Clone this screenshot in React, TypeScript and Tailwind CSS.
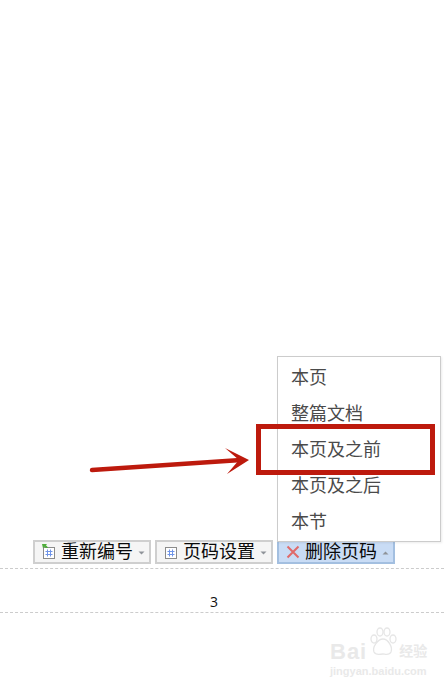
const cjk = "font-['Inter','Noto_Sans_CJK_SC',sans-serif]";

function Caret({ up = false }: { up?: boolean }) {
  return (
    <svg width="7" height="4" viewBox="0 0 7 4" className="ml-[5px] mt-[2px]">
      <path d={up ? "M3.5 0.5L6.5 3.5H0.5Z" : "M0.5 0.5H6.5L3.5 3.5Z"} fill="#8f9399" />
    </svg>
  );
}

function HashIcon({ green = false }: { green?: boolean }) {
  return (
    <svg width="14" height="16" viewBox="0 0 14 16" className="shrink-0">
      <rect x="1.5" y="3.5" width="11" height="11" fill="#fff" stroke="#8b8b8b" />
      <path d="M5.5 5.5V12.5M8.5 5.5V12.5M3.5 7.5H10.5M3.5 10.5H10.5" stroke="#6f94e8" strokeWidth="1" fill="none" />
      {green && <path d="M0 0H5L3.8 1.4C5 1.8 5.6 2.5 6 4H3.6C3.4 3.3 3 3 2.4 2.8L1 4.2Z" fill="#4fae3c" />}
    </svg>
  );
}

function ToolButton({ label, icon, active = false }: { label: string; icon: React.ReactNode; active?: boolean }) {
  return (
    <div
      className={`flex h-[24px] w-[118px] items-center border-2 pl-[7px] ${
        active ? "border-[#a3bfe0] bg-[#c9dcf5]" : "border-[#cfcfcf] bg-[#f5f5f5]"
      }`}
    >
      {icon}
      <span className="ml-[5px] text-[18px] leading-[22px] text-[#0a0a0a]">{label}</span>
      <Caret up={active} />
    </div>
  );
}

const items = ["本页", "整篇文档", "本页及之前", "本页及之后", "本节"];

export default function App() {
  return (
    <div className={`relative flex h-[687px] w-[444px] flex-col overflow-hidden bg-white ${cjk}`}>
      <div className="h-[540px] shrink-0" />
      <div className="flex h-[24px] shrink-0 gap-[4px] pl-[33px]">
        <ToolButton label="重新编号" icon={<HashIcon green />} />
        <ToolButton label="页码设置" icon={<HashIcon />} />
        <ToolButton
          active
          label="删除页码"
          icon={
            <svg width="14" height="14" viewBox="0 0 14 14" className="shrink-0">
              <path d="M1.5 1.5L12.5 12.5M12.5 1.5L1.5 12.5" stroke="#e06a6a" strokeWidth="2" fill="none" />
            </svg>
          }
        />
      </div>
      <div className="mt-[4px] h-[45px] shrink-0 border-y border-dashed border-[#cccccc]">
        <div className="pl-[210px] pt-[24px] font-['Open_Sans',sans-serif] text-[14px] leading-[18px] text-[#111]">3</div>
      </div>

      {/* dropdown menu */}
      <div className="absolute left-[277px] top-[356px] w-[164px] border border-[#cccccc] bg-white py-[2px] pl-[13px] shadow-[1px_1px_2px_rgba(0,0,0,0.08)]">
        {items.map((t) => (
          <div key={t} className="flex h-[36px] items-center text-[18px] text-[#4a4a4a]">
            {t}
          </div>
        ))}
      </div>

      {/* annotation rectangle */}
      <div className="absolute left-[256px] top-[424px] h-[51px] w-[179px] border-[5px] border-[#bd1a0d]" />

      {/* annotation arrow */}
      <svg className="absolute left-[85px] top-[445px]" width="170" height="32" viewBox="0 0 170 32">
        <path d="M7 25L156 15" stroke="#bd1a0d" strokeWidth="4.5" strokeLinecap="round" fill="none" />
        <path d="M140 3L164 15L142 29L154 15Z" fill="#bd1a0d" />
      </svg>

      {/* watermark */}
      <div className="absolute left-[330px] top-[640px] h-[40px] w-[114px] text-[#e9e9e9]">
        <div className="flex items-start">
          <span className="font-['Liberation_Sans',sans-serif] text-[22px] font-bold leading-[24px] tracking-[1px]">Bai</span>
          <svg width="32" height="32" viewBox="0 0 32 32" className="mt-[-15px] ml-[-1px] shrink-0" fill="none" stroke="#e6e6e6" strokeWidth="1.3">
            <ellipse cx="8" cy="14" rx="3" ry="4" />
            <ellipse cx="14" cy="7" rx="3" ry="4" />
            <ellipse cx="21" cy="7" rx="3" ry="4" />
            <ellipse cx="27" cy="14" rx="3" ry="4" />
            <path d="M17 14C22 14 27 22 25 27C23 31 19 29 17 29C14 29 10 31 8 27C6 22 12 14 17 14Z" />
          </svg>
          <span className="ml-[1px] text-[14px] font-bold leading-[22px]">经验</span>
        </div>
        <div className="mt-[1px] font-['Liberation_Sans',sans-serif] text-[11px] font-bold leading-[12px] whitespace-nowrap">jingyan.baidu.com</div>
      </div>
    </div>
  );
}
